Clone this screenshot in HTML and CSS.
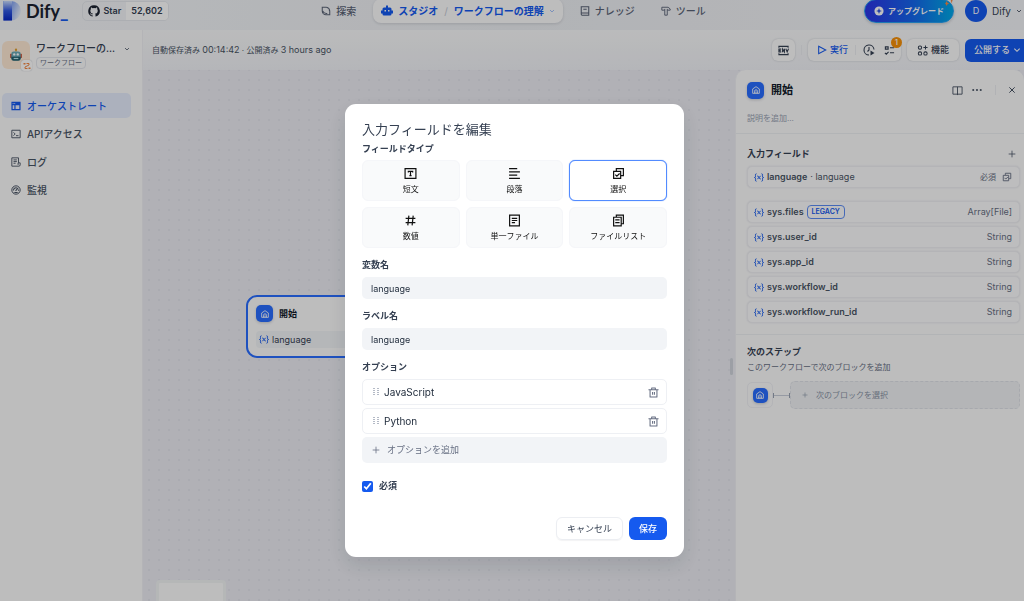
FILE: index.html
```html
<!DOCTYPE html>
<html lang="ja">
<head>
<meta charset="utf-8">
<title>ワークフローの理解 - Dify</title>
<link rel="stylesheet" href="styles.css">
</head>
<body>
<svg class="defs" aria-hidden="true">
  <symbol id="i-home" viewBox="0 0 24 24"><path d="M4 20V9.500L12 4l8 5.500V20H4z M8.500 20v-5a3.500 3.500 0 0 1 7 0v5 M12 20v-5" fill="none" stroke="currentColor" stroke-width="2" stroke-linejoin="round"/></symbol>
  <symbol id="i-down" viewBox="0 0 12 12"><path d="M2 4l4 4 4-4" fill="none" stroke="currentColor" stroke-width="1.600"/></symbol>
  <symbol id="i-plus" viewBox="0 0 12 12"><path d="M6 1v10M1 6h10" fill="none" stroke="currentColor" stroke-width="1.200"/></symbol>
  <symbol id="i-var" viewBox="0 0 20 18"><path d="M5 1.500C2 1.500 3 5 3 6.500 3 8 2.500 9 1 9c1.500 0 2 1 2 2.500 0 1.500-1 5 2 5M15 1.500c3 0 2 3.500 2 5 0 1.500.5 2.500 2 2.500-1.500 0-2 1-2 2.500 0 1.500 1 5-2 5M6.500 6c3.500-1 3 6.500 7 6M13.500 5.500L6.500 12.500" fill="none" stroke="currentColor" stroke-width="2"/></symbol>
  <symbol id="i-select" viewBox="0 0 24 24"><path d="M8 7V3h13v13h-4M3 8h13v13H3zM6 14l3 3 5-5" fill="none" stroke="currentColor" stroke-width="2.200"/></symbol>
  <symbol id="i-trash" viewBox="0 0 24 24"><path d="M1 6h22M4.500 6v16h15V6M8 6V2h8v4M10 11v6M14 11v6" fill="none" stroke="currentColor" stroke-width="2.300" stroke-linejoin="round"/></symbol>
  <symbol id="i-grip" viewBox="0 0 6 8"><path d="M0 0h2v1H0zM4 0h2v1H4zM0 2h2v1H0zM4 2h2v1H4zM0 4h2v1H0zM4 4h2v1H4zM0 6h2v1H0zM4 6h2v1H4z" fill="currentColor"/></symbol>
</svg>

<div class="app">
  <header class="topbar">
    <div class="brand">
      <svg class="logo-mark" viewBox="0 0 18 21" aria-hidden="true">
        <defs>
          <linearGradient id="g1" x1="0" y1="0" x2="0" y2="1"><stop offset="0" stop-color="#c9dcff"/><stop offset=".5" stop-color="#3158e0"/><stop offset="1" stop-color="#0626c4"/></linearGradient>
          <linearGradient id="g2" x1="0" y1="0" x2="1" y2=".4"><stop offset="0" stop-color="#3a6df0"/><stop offset="1" stop-color="#dfe9fb"/></linearGradient>
        </defs>
        <path d="M0 0h8a10 10 0 0 1 0 20.500H0z" fill="url(#g2)"/><path d="M0 0h9v20.500H0z" fill="url(#g1)"/>
      </svg>
      <span class="logo-text">Dify<b>_</b></span>
      <div class="github">
        <a class="star" href="#"><svg class="ic12" viewBox="0 0 24 24" aria-hidden="true"><path fill="currentColor" d="M12 .5a11.500 11.500 0 0 0-3.600 22.400c.6.100.8-.3.800-.6v-2c-3.200.7-3.900-1.500-3.900-1.500-.5-1.300-1.300-1.700-1.300-1.700-1-.7.100-.7.100-.7 1.200.1 1.800 1.200 1.800 1.200 1 1.800 2.700 1.300 3.400 1 .1-.8.400-1.300.7-1.600-2.600-.3-5.300-1.300-5.300-5.700 0-1.300.5-2.300 1.200-3.100-.1-.3-.5-1.500.1-3.100 0 0 1-.3 3.200 1.200a11 11 0 0 1 5.800 0c2.200-1.500 3.200-1.200 3.200-1.200.6 1.600.2 2.800.1 3.100.7.800 1.200 1.800 1.200 3.100 0 4.400-2.700 5.400-5.300 5.700.4.400.8 1.100.8 2.200v3.100c0 .3.200.7.800.6A11.500 11.500 0 0 0 12 .5z"/></svg>Star</a>
        <a class="count" href="#">52,602</a>
      </div>
    </div>
    <nav class="mainnav">
      <a href="#"><svg class="ic10" viewBox="0 0 24 24" aria-hidden="true"><path d="M3 3h9a9 9 0 0 1 9 9v9h-9a9 9 0 0 1-9-9zM4 12c2 4 6 7 11 6M15 4c4 1 6 4 5 8" fill="none" stroke="currentColor" stroke-width="2.500"/></svg>探索</a>
      <div class="current">
        <a href="#"><svg class="ic12" viewBox="0 0 24 24" aria-hidden="true"><path fill="currentColor" fill-rule="evenodd" d="M10 1h4v4h4a3 3 0 0 1 3 3v3h3v6h-3v1a3 3 0 0 1-3 3H6a3 3 0 0 1-3-3v-1H0v-6h3V8a3 3 0 0 1 3-3h4zM7 10v3h3v-3zm7 0v3h3v-3z"/></svg>スタジオ</a>
        <span class="slash">/</span>
        <a href="#">ワークフローの理解<svg class="ic6" aria-hidden="true"><use href="#i-down"/></svg></a>
      </div>
      <a href="#"><svg class="ic10" viewBox="0 0 24 24" aria-hidden="true"><path d="M3 2h18v20H5a2 2 0 0 1-2-2zM3 17h18M8 8h8" fill="none" stroke="currentColor" stroke-width="2.500"/></svg>ナレッジ</a>
      <a class="tools" href="#"><svg class="ic10" viewBox="0 0 24 24" aria-hidden="true"><path d="M2 3h15l5 4v3h-7v12H9V10H2zM9 10V7M15 10V7" fill="none" stroke="currentColor" stroke-width="2.200"/></svg>ツール</a>
    </nav>
    <div class="account">
      <button class="upgrade" type="button"><svg class="ic10" viewBox="0 0 24 24" aria-hidden="true"><circle cx="12" cy="12" r="11" fill="#fff"/><path d="M12 5l2 5 5 2-5 2-2 5-2-5-5-2 5-2z" fill="#2c4fe0"/></svg>アップグレード
        <svg class="spark" viewBox="0 0 12 12" aria-hidden="true"><path d="M8 0l1 3 3 1-3 1-1 4-1-4-3-1 3-1zM2 6l1 2 2 1-2 1-1 2-1-2-1-1 1-1z" fill="#f38744"/></svg>
      </button>
      <button class="user" type="button"><span class="avatar">D</span>Dify<svg class="ic6" aria-hidden="true"><use href="#i-down"/></svg></button>
    </div>
  </header>

  <div class="body">
    <aside class="sidebar">
      <div class="appinfo">
        <div class="appicon">
          <svg class="robot" viewBox="0 0 24 24" aria-hidden="true"><path d="M11 2h2v4h-2z" fill="#c98a3a"/><circle cx="12" cy="3" r="2" fill="#e0a030"/><path d="M2 10h20v7H2z" fill="#c4492f"/><rect x="4" y="6" width="16" height="15" rx="4" fill="#6aaab8"/><path d="M4 15h16v3a4 4 0 0 1-4 4H8a4 4 0 0 1-4-4z" fill="#24616f"/><circle cx="9" cy="11" r="2" fill="#fff"/><circle cx="15" cy="11" r="2" fill="#fff"/><path d="M8 17h8v2H8z" fill="#bfe3ea"/></svg>
          <span class="flowmark"><svg class="ic8" viewBox="0 0 16 16" aria-hidden="true"><path d="M1 2h4v3H1zM11 11h4v3h-4z" fill="#f38744"/><path d="M7 3h5v3L4 10v3h5" fill="none" stroke="#f38744" stroke-width="2"/></svg></span>
        </div>
        <div class="appname"><strong>ワークフローの...</strong><span class="tag">ワークフロー</span></div>
        <svg class="ic6" aria-hidden="true"><use href="#i-down"/></svg>
      </div>
      <nav class="sidenav">
        <a class="active" href="#"><svg class="ic10" viewBox="0 0 24 24" aria-hidden="true"><path d="M1 2h22v20H1zM4 10v9h4v-9zm7 0v9h9v-9z" fill="currentColor" fill-rule="evenodd"/><path d="M4 6h2M8 6h2" stroke="#fff" stroke-width="2"/></svg>オーケストレート</a>
        <a href="#"><svg class="ic10" viewBox="0 0 24 24" aria-hidden="true"><path d="M2 3h20v18H2zM6 8l4 4-4 4M12 16h6" fill="none" stroke="currentColor" stroke-width="2.200"/></svg>APIアクセス</a>
        <a href="#"><svg class="ic10" viewBox="0 0 24 24" aria-hidden="true"><path d="M18 14V2H2v20h17a3 3 0 0 0 3-3v-5h-5v5M6 7h8M6 11h8M6 15h5" fill="none" stroke="currentColor" stroke-width="2.200"/></svg>ログ</a>
        <a href="#"><svg class="ic10" viewBox="0 0 24 24" aria-hidden="true"><circle cx="12" cy="12" r="10" fill="none" stroke="currentColor" stroke-width="2.400"/><path d="M6 13a6 6 0 0 1 8-6M18 11v3M8 18h8M11 14l6-7" fill="none" stroke="currentColor" stroke-width="2.600"/></svg>監視</a>
      </nav>
    </aside>

    <main class="canvas">
      <div class="toolbar">
        <p class="saved">自動保存済み <span>00:14:42</span> · 公開済み <span>3 hours ago</span></p>
        <div class="actions">
          <button class="tool env" type="button" aria-label="環境変数"><svg class="ic11" viewBox="0 0 24 24" aria-hidden="true"><path d="M2 6V3h20v3M2 18v3h20v-3M7 9H2v6h5M2 12h4M10 16V9l4 6V8M17 8l3 7 3-7" fill="none" stroke="currentColor" stroke-width="2.400"/></svg></button>
          <span class="vline"></span>
          <div class="tool group">
            <button class="run" type="button"><svg class="ic10" viewBox="0 0 24 24" aria-hidden="true"><path d="M4 3l17 9-17 9z" fill="none" stroke="currentColor" stroke-width="2.500"/></svg>実行</button>
            <span class="vline"></span>
            <button type="button" aria-label="実行履歴"><svg class="ic12" viewBox="0 0 24 24" aria-hidden="true"><path d="M22 11a10 10 0 1 0-10 11M12 6v6l-3 3" fill="none" stroke="currentColor" stroke-width="2.200"/><path d="M15 13l8 5-8 5z" fill="currentColor"/></svg></button>
            <button class="check" type="button" aria-label="チェックリスト"><svg class="ic11" viewBox="0 0 24 24" aria-hidden="true"><path d="M3 4h6v5H3zM2 17l3 3 5-5M13 6h9M13 17h9" fill="none" stroke="currentColor" stroke-width="2.400"/></svg><span class="badge">1</span></button>
          </div>
          <button class="tool feature" type="button"><svg class="ic11" viewBox="0 0 24 24" aria-hidden="true"><g fill="none" stroke="currentColor" stroke-width="2.200"><rect x="3" y="2" width="7" height="7" rx="3"/><rect x="3" y="15" width="7" height="7" rx="3"/><rect x="15" y="15" width="7" height="7" rx="3"/><path d="M18.500 1v9M14 5.500h9"/></g></svg>機能</button>
          <button class="publish" type="button">公開する<svg class="ic8" aria-hidden="true"><use href="#i-down"/></svg></button>
        </div>
      </div>

      <section class="node">
        <h2><span class="start"><svg class="ic10" aria-hidden="true"><use href="#i-home"/></svg></span>開始</h2>
        <p><svg class="var" aria-hidden="true"><use href="#i-var"/></svg>language</p>
      </section>
      <div class="minimap"></div>
      <div class="handle"></div>

      <section class="panel">
        <header class="panel-head">
          <div class="panel-title">
            <span class="start"><svg class="ic10" aria-hidden="true"><use href="#i-home"/></svg></span>
            <h2>開始</h2>
            <button type="button" aria-label="ヘルプ"><svg class="ic11" viewBox="0 0 24 24" aria-hidden="true"><path d="M2 4h20v16H2zM12 4v18" fill="none" stroke="currentColor" stroke-width="2"/></svg></button>
            <button type="button" aria-label="その他"><svg class="ic10" viewBox="0 0 24 24" aria-hidden="true"><g fill="currentColor"><circle cx="3" cy="12" r="2.500"/><circle cx="12" cy="12" r="2.500"/><circle cx="21" cy="12" r="2.500"/></g></svg></button>
            <span class="vline"></span>
            <button type="button" aria-label="閉じる"><svg class="ic8" viewBox="0 0 12 12" aria-hidden="true"><path d="M2 2l8 8M10 2l-8 8" stroke="currentColor" stroke-width="1.500"/></svg></button>
          </div>
          <p>説明を追加...</p>
        </header>
        <div class="inputs">
          <div class="inputs-head"><h3>入力フィールド</h3><button type="button" aria-label="追加"><svg class="ic8" aria-hidden="true"><use href="#i-plus"/></svg></button></div>
          <div class="row"><svg class="var" aria-hidden="true"><use href="#i-var"/></svg><b>language</b><span class="alias">· language</span><span class="type ja">必須</span><svg class="ic10 muted" aria-hidden="true"><use href="#i-select"/></svg></div>
          <ul class="sys">
            <li class="row"><svg class="var" aria-hidden="true"><use href="#i-var"/></svg><b>sys.files</b><span class="legacy">LEGACY</span><span class="type">Array[File]</span></li>
            <li class="row"><svg class="var" aria-hidden="true"><use href="#i-var"/></svg><b>sys.user_id</b><span class="type">String</span></li>
            <li class="row"><svg class="var" aria-hidden="true"><use href="#i-var"/></svg><b>sys.app_id</b><span class="type">String</span></li>
            <li class="row"><svg class="var" aria-hidden="true"><use href="#i-var"/></svg><b>sys.workflow_id</b><span class="type">String</span></li>
            <li class="row"><svg class="var" aria-hidden="true"><use href="#i-var"/></svg><b>sys.workflow_run_id</b><span class="type">String</span></li>
          </ul>
        </div>
        <div class="next">
          <h3>次のステップ</h3>
          <p>このワークフローで次のブロックを追加</p>
          <div class="next-row">
            <span class="next-icon"><span class="start"><svg class="ic10" aria-hidden="true"><use href="#i-home"/></svg></span></span>
            <span class="wire"></span>
            <button type="button"><svg class="ic6" aria-hidden="true"><use href="#i-plus"/></svg>次のブロックを選択</button>
          </div>
        </div>
      </section>
    </main>
  </div>
</div>

<div class="backdrop">
  <form class="modal" role="dialog" aria-labelledby="dialog-title">
    <h1 id="dialog-title">入力フィールドを編集</h1>
    <h2 class="label">フィールドタイプ</h2>
    <div class="types">
      <button type="button"><svg class="ic13" viewBox="0 0 24 24" aria-hidden="true"><path d="M2 3h20v18H2zM8 10V8h8v2M12 8v8M10 16h4" fill="none" stroke="currentColor" stroke-width="2.200"/></svg>短文</button>
      <button type="button"><svg class="ic13" viewBox="0 0 24 24" aria-hidden="true"><path d="M2 3h15M2 9h20M2 15h15M2 21h20" stroke="currentColor" stroke-width="2.200"/></svg>段落</button>
      <button class="selected" type="button" aria-pressed="true"><svg class="ic13" aria-hidden="true"><use href="#i-select"/></svg>選択</button>
      <button type="button"><svg class="ic13" viewBox="0 0 24 24" aria-hidden="true"><path d="M9 3L7 21M17 3l-2 18M3 8h18M3 16h18" stroke="currentColor" stroke-width="2.200"/></svg>数値</button>
      <button type="button"><svg class="ic13" viewBox="0 0 24 24" aria-hidden="true"><path d="M3 2h18v20H3zM7 8h10M7 12h10M7 16h6" fill="none" stroke="currentColor" stroke-width="2.200"/></svg>単一ファイル</button>
      <button type="button"><svg class="ic13" viewBox="0 0 24 24" aria-hidden="true"><path d="M8 6V2h13v16h-4M3 6h14v16H3zM6 11h8M6 16h8" fill="none" stroke="currentColor" stroke-width="2.200"/></svg>ファイルリスト</button>
    </div>
    <div class="field"><label class="label" for="name">変数名</label><input id="name" type="text" value="language"></div>
    <div class="field"><label class="label" for="lab">ラベル名</label><input id="lab" type="text" value="language"></div>
    <div class="field">
      <h2 class="label">オプション</h2>
      <div class="options">
        <div class="option"><svg class="grip" aria-hidden="true"><use href="#i-grip"/></svg><input type="text" value="JavaScript" aria-label="オプション 1"><button type="button" aria-label="削除"><svg class="ic11" aria-hidden="true"><use href="#i-trash"/></svg></button></div>
        <div class="option"><svg class="grip" aria-hidden="true"><use href="#i-grip"/></svg><input type="text" value="Python" aria-label="オプション 2"><button type="button" aria-label="削除"><svg class="ic11" aria-hidden="true"><use href="#i-trash"/></svg></button></div>
        <button class="add" type="button"><svg class="ic8" aria-hidden="true"><use href="#i-plus"/></svg>オプションを追加</button>
      </div>
    </div>
    <label class="required"><input type="checkbox" checked>必須</label>
    <div class="buttons"><button class="cancel" type="button">キャンセル</button><button class="save" type="submit">保存</button></div>
  </form>
</div>
</body>
</html>
```

FILE: styles.css
```css
* { box-sizing: border-box; }
html, body { height: 100%; }
body { margin: 0; overflow: hidden; font: 9px/12px Inter, "Noto Sans CJK JP", sans-serif; color: #354052; }
h1, h2, h3, p, ul { margin: 0; padding: 0; font-size: inherit; font-weight: inherit; }
ul { list-style: none; }
a { color: inherit; text-decoration: none; }
button, input { font: inherit; color: inherit; border: 0; background: none; padding: 0; margin: 0; }
button { display: flex; align-items: center; white-space: nowrap; }
svg { flex: none; display: block; }
.defs { position: absolute; width: 0; height: 0; }
.ic6 { width: 6px; height: 6px; }
.ic8 { width: 8px; height: 8px; }
.ic10 { width: 10px; height: 10px; }
.ic11 { width: 11px; height: 11px; }
.ic12 { width: 12px; height: 12px; }
.ic13 { width: 13px; height: 13px; }
.var { width: 10px; height: 9px; color: #155aef; }
.muted { color: #676f83; }
.vline { width: 1px; height: 10px; background: #eceef2; }

.app { height: 100%; display: flex; flex-direction: column; background: #f3f5f8; }

/* top bar */
.topbar { display: flex; justify-content: space-between; align-items: center; height: 30px; flex: none; padding: 0 0 9px 3px; background: linear-gradient(90deg, #f5f7fa, #edeff3 50%, #f3f5f8); }
.brand { display: flex; align-items: center; width: 300px; }
.logo-mark { width: 18px; height: 20px; }
.logo-text { margin-left: 5px; font: 700 18px/20px Lato, sans-serif; color: #1b2230; }
.logo-text b { font-weight: 900; color: #155aef; }
.github { display: flex; height: 20px; margin-left: 13px; border: 1px solid #e6e9ee; border-radius: 5px; font-weight: 600; overflow: hidden; }
.star, .count { display: flex; align-items: center; padding: 0 5px; gap: 4px; }
.star svg { color: #1b2230; }
.count { background: #fff; }
.mainnav { display: flex; align-items: center; gap: 17px; font-size: 10px; font-weight: 500; color: #5a6376; }
.mainnav a { display: flex; align-items: center; gap: 5px; }
.mainnav .tools { margin-left: 9px; }
.mainnav .current { display: flex; align-items: center; gap: 6px; height: 24px; padding: 0 8px; border-radius: 8px; background: #fcfcfd; box-shadow: 0 1px 3px #10182822; color: #155aef; font-weight: 700; }
.mainnav .current .ic6 { color: #8eb0f8; }
.slash { color: #c3c8d2; font-weight: 400; }
.account { display: flex; align-items: center; justify-content: flex-end; gap: 11px; width: 300px; padding-right: 2px; }
.upgrade { position: relative; height: 24px; padding: 0 9px; gap: 4px; border: 1px solid #28a0f0; border-radius: 12px; color: #fff; font-weight: 600; font-size: 8px; background: linear-gradient(90deg, #2c35e8, #1467ee 55%, #00a9e8); box-shadow: 0 1px 3px #10182833; }
.spark { position: absolute; width: 10px; height: 10px; right: -2px; top: -4px; }
.user { gap: 5px; font-size: 10px; color: #354052; }
.avatar { width: 22px; height: 22px; border-radius: 50%; background: #155aef; color: #fff; font-size: 9px; line-height: 22px; text-align: center; }

.body { display: flex; flex: 1; min-height: 0; }

/* sidebar */
.sidebar { width: 143px; flex: none; background: #fcfcfd; border-right: 1px solid #f0f1f4; padding: 11px 11px 0 2px; }
.appinfo { display: flex; align-items: flex-start; height: 28px; padding-right: 1px; }
.appinfo > .ic6 { margin: 5px 0 0 auto; color: #495464; }
.appicon { position: relative; width: 28px; height: 28px; border-radius: 6px; background: #ffead5; display: flex; align-items: center; justify-content: center; }
.robot { width: 14px; height: 14px; }
.flowmark { position: absolute; right: -2px; bottom: -2px; width: 11px; height: 11px; display: flex; align-items: center; justify-content: center; background: #fff; border-radius: 3px; box-shadow: 0 0 1px #10182855; }
.appname { margin-left: 6px; display: flex; flex-direction: column; align-items: flex-start; gap: 2px; }
.appname strong { font-size: 10px; line-height: 14px; font-weight: 500; }
.tag { padding: 0 3px; font-size: 7px; line-height: 10px; border: 1px solid #e3e6ec; border-radius: 4px; color: #676f83; }
.sidenav { display: flex; flex-direction: column; gap: 3px; margin-top: 24px; font-size: 10px; font-weight: 500; color: #495464; }
.sidenav a { display: flex; align-items: center; gap: 6px; height: 25px; padding-left: 9px; border-radius: 5px; }
.sidenav .active { color: #155aef; background: #e6edfd; }

/* workflow canvas */
.canvas { position: relative; flex: 1; min-width: 0; display: flex; flex-direction: column; overflow: hidden; background: radial-gradient(circle at 5px 5px, #e3e5ec 1px, transparent 1px) 1px 5px / 10px 10px, #ecedf3; }
.toolbar { display: flex; align-items: center; justify-content: space-between; height: 40px; flex: none; padding-left: 9px; background: linear-gradient(#f9fafb, #f3f4f8cc); }
.saved { font-size: 8px; color: #495464; }
.saved span { font-size: 9px; }
.actions { display: flex; align-items: center; gap: 6px; height: 23px; font-weight: 500; }
.tool { display: flex; align-items: center; height: 22px; background: #fcfcfd; border-radius: 6px; box-shadow: 0 0 2px #10182833; }
.env { width: 23px; justify-content: center; }
.group { padding: 0 6px 0 9px; gap: 7px; }
.run { gap: 3px; color: #155aef; }
.check { position: relative; margin-left: 2px; }
.badge { position: absolute; right: -7px; top: -8px; width: 11px; height: 11px; border-radius: 50%; background: #f79009; color: #fff; font-size: 8px; line-height: 11px; text-align: center; }
.feature { padding: 0 10px; gap: 3px; }
.publish { height: 23px; padding: 0 3px 0 9px; gap: 3px; border-radius: 6px 0 0 6px; background: #155aef; color: #fff; }
.start { display: flex; align-items: center; justify-content: center; width: 17px; height: 17px; flex: none; border-radius: 5px; background: #296dff; color: #fff; box-shadow: 0 1px 3px #10182833; }
.node { position: absolute; left: 103px; top: 265px; width: 170px; padding: 8px; border: 2px solid #296dff; border-radius: 11px; background: #fcfcfd; }
.node h2 { display: flex; align-items: center; gap: 6px; font-weight: 700; color: #101828; }
.node p { display: flex; align-items: center; gap: 3px; height: 17px; margin-top: 9px; padding-left: 3px; border-radius: 4px; background: #f2f4f7; }
.minimap { position: absolute; left: 13px; bottom: -50px; width: 70px; height: 71px; background: #fcfcfd; border: 3px solid #f2f4f5; border-radius: 4px; }
.handle { position: absolute; right: 291px; top: 328px; width: 3px; height: 17px; border-radius: 2px; background: #d0d5dc; }

/* node settings panel */
.panel { align-self: flex-end; width: 289px; flex: 1; background: #fcfcfd; border-radius: 10px 10px 0 0; border-left: 1px solid #f0f1f4; color: #495464; }
.panel-head { padding: 11px 8px 9px 11px; border-bottom: 1px solid #eef0f3; }
.panel-title { display: flex; align-items: center; gap: 9px; height: 18px; }
.panel-title h2 { margin: 0 auto 0 -2px; font-size: 11px; font-weight: 700; color: #101828; }
.panel-title .vline { margin: 0 3px 0 4px; }
.panel-head p { margin-top: 13px; font-size: 8px; color: #98a2b2; }
.inputs { padding: 14px 4px 11px 11px; border-bottom: 1px solid #eef0f3; }
.inputs-head { display: flex; justify-content: space-between; align-items: center; padding-right: 4px; margin-bottom: 6px; }
.inputs-head h3, .next h3 { font-weight: 700; color: #354052; }
.row { display: flex; align-items: center; height: 22px; gap: 3px; padding: 0 7px 0 6px; border: 1px solid #f0f1f4; border-radius: 5px; background: #fdfdfe; box-shadow: 0 0 2px #1018281a; }
.row b { font-weight: 600; }
.row .type { margin-left: auto; color: #676f83; }
.row .ja { font-size: 8px; }
.row .ic10 { margin-left: 3px; }
.sys { display: flex; flex-direction: column; gap: 3px; margin-top: 13px; }
.legacy { padding: 0 4px; border: 1px solid #5c8cf5; border-radius: 4px; color: #155aef; font-size: 7px; font-weight: 600; }
.next { padding: 11px 4px 0 11px; }
.next p { margin-top: 3px; font-size: 8px; color: #676f83; }
.next-row { display: flex; align-items: center; margin-top: 8px; }
.next-icon { display: flex; align-items: center; justify-content: center; width: 26px; height: 26px; border: 1px solid #f0f1f4; border-radius: 5px; }
.next-icon .start { width: 15px; height: 15px; }
.wire { width: 17px; height: 5px; background: linear-gradient(#c8ceda, #c8ceda) center / 100% 1px no-repeat; border: solid #98a2b2; border-width: 0 1px; }
.next-row button { flex: 1; height: 28px; gap: 8px; padding-left: 11px; border: 1px dashed #dfe2e8; border-radius: 5px; background: #f0f2f5; color: #8a93a5; font-size: 8px; }

/* edit dialog */
.backdrop { position: fixed; inset: 0; display: flex; justify-content: center; align-items: flex-start; padding: 104px 0 0 5px; background: rgba(0, 0, 0, .25); }
.modal { width: 339px; padding: 15px 17px 17px; border-radius: 11px; background: #fff; box-shadow: 0 8px 20px #1018281f; }
.modal h1 { font-size: 13px; line-height: 20px; margin-bottom: 4px; color: #354052; }
.label { display: block; font-weight: 600; line-height: 12px; margin-bottom: 6px; color: #354052; }
.modal > .label { margin-bottom: 5px; }
.types { display: grid; grid-template-columns: repeat(3, 1fr); gap: 6px; }
.types button { flex-direction: column; justify-content: center; gap: 3px; height: 41px; border: 1px solid #f5f6f9; border-radius: 6px; background: #f9fafb; font-size: 8px; color: #101010; }
.types .selected { border: 1px solid #528bff; background: #fff; box-shadow: 0 0 1px #528bff; }
.field { margin-top: 11px; }
.field > input { display: block; width: 100%; height: 22px; padding: 0 9px; border-radius: 5px; background: #f2f4f7; color: #1d2939; }
.options { display: flex; flex-direction: column; gap: 3px; }
.option { display: flex; align-items: center; height: 26px; padding: 0 7px 0 10px; border: 1px solid #eef0f4; border-radius: 5px; }
.grip { width: 6px; height: 8px; color: #b4bac6; }
.option input { flex: 1; min-width: 0; margin-left: 5px; font-size: 10px; color: #1d2939; }
.option button { color: #676f83; }
.add { height: 26px; gap: 7px; padding-left: 10px; border-radius: 5px; background: #f2f4f7; color: #676f83; }
.required { display: flex; align-items: center; gap: 6px; margin-top: 17px; font-weight: 600; }
.required input { width: 11px; height: 11px; accent-color: #155aef; }
.buttons { display: flex; justify-content: flex-end; gap: 6px; margin-top: 25px; }
.buttons button { height: 23px; padding: 0 10px; border-radius: 6px; font-weight: 500; }
.buttons .cancel { border: 1px solid #eceef2; box-shadow: 0 1px 1px #1018280d; font-weight: 400; }
.buttons .save { background: #155aef; color: #fff; }
```
